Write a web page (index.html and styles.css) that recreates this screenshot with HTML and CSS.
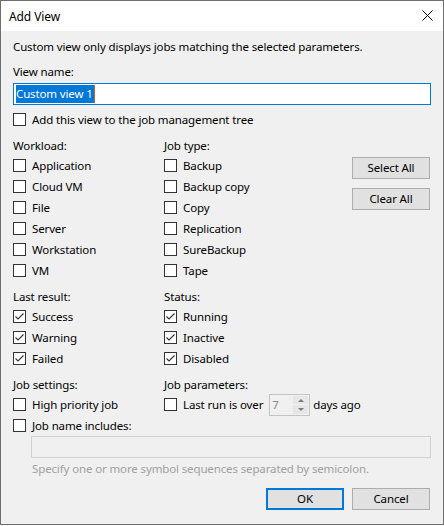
FILE: index.html
```html
<!DOCTYPE html>
<html>
<head>
<meta charset="utf-8">
<link rel="stylesheet" href="styles.css">
</head>
<body>
<div class="window">
  <div class="titlebar">
    <span class="title">Add View</span>
    <svg class="close" width="11" height="11" viewBox="0 0 11 11"><path d="M0.5 0.5 L10.5 10.5 M10.5 0.5 L0.5 10.5" stroke="#000" stroke-width="1" fill="none"/></svg>
  </div>
  <div class="body">
    <p class="desc">Custom view only displays jobs matching the selected parameters.</p>
    <div class="field-label">View name:</div>
    <div class="textbox"><span class="sel">Custom view 1</span><span class="caret"></span></div>
    <div class="check add-row"><span class="box"></span><span>Add this view to the job management tree</span></div>

    <div class="filters">
      <div class="group">
        <div class="group-label">Workload:</div>
        <div class="check"><span class="box"></span><span>Application</span></div>
        <div class="check"><span class="box"></span><span>Cloud VM</span></div>
        <div class="check"><span class="box"></span><span>File</span></div>
        <div class="check"><span class="box"></span><span>Server</span></div>
        <div class="check"><span class="box"></span><span>Workstation</span></div>
        <div class="check"><span class="box"></span><span>VM</span></div>
      </div>
      <div class="group">
        <div class="group-label">Job type:</div>
        <div class="check"><span class="box"></span><span>Backup</span></div>
        <div class="check"><span class="box"></span><span>Backup copy</span></div>
        <div class="check"><span class="box"></span><span>Copy</span></div>
        <div class="check"><span class="box"></span><span>Replication</span></div>
        <div class="check"><span class="box"></span><span>SureBackup</span></div>
        <div class="check"><span class="box"></span><span>Tape</span></div>
      </div>
      <div class="side-buttons">
        <button class="btn">Select All</button>
        <button class="btn">Clear All</button>
      </div>

      <div class="group">
        <div class="group-label">Last result:</div>
        <div class="check"><span class="box checked"><svg width="11" height="11" viewBox="0 0 11 11"><path d="M1.5 5.5 L4 8 L9.5 2.5" stroke="#333" stroke-width="1.1" fill="none"/></svg></span><span>Success</span></div>
        <div class="check"><span class="box checked"><svg width="11" height="11" viewBox="0 0 11 11"><path d="M1.5 5.5 L4 8 L9.5 2.5" stroke="#333" stroke-width="1.1" fill="none"/></svg></span><span>Warning</span></div>
        <div class="check"><span class="box checked"><svg width="11" height="11" viewBox="0 0 11 11"><path d="M1.5 5.5 L4 8 L9.5 2.5" stroke="#333" stroke-width="1.1" fill="none"/></svg></span><span>Failed</span></div>
      </div>
      <div class="group">
        <div class="group-label">Status:</div>
        <div class="check"><span class="box checked"><svg width="11" height="11" viewBox="0 0 11 11"><path d="M1.5 5.5 L4 8 L9.5 2.5" stroke="#333" stroke-width="1.1" fill="none"/></svg></span><span>Running</span></div>
        <div class="check"><span class="box checked"><svg width="11" height="11" viewBox="0 0 11 11"><path d="M1.5 5.5 L4 8 L9.5 2.5" stroke="#333" stroke-width="1.1" fill="none"/></svg></span><span>Inactive</span></div>
        <div class="check"><span class="box checked"><svg width="11" height="11" viewBox="0 0 11 11"><path d="M1.5 5.5 L4 8 L9.5 2.5" stroke="#333" stroke-width="1.1" fill="none"/></svg></span><span>Disabled</span></div>
      </div>
      <div></div>

      <div class="group">
        <div class="group-label">Job settings:</div>
        <div class="check"><span class="box"></span><span>High priority job</span></div>
      </div>
      <div class="group">
        <div class="group-label">Job parameters:</div>
        <div class="check"><span class="box"></span><span>Last run is over</span>
          <span class="spinner"><span class="spin-value">7</span><span class="spin-arrows"><span class="arrow up"></span><span class="arrow down"></span></span></span>
          <span class="after">days ago</span>
        </div>
      </div>
      <div></div>
    </div>

    <div class="check"><span class="box"></span><span>Job name includes:</span></div>
    <div class="textbox disabled"></div>
    <p class="hint">Specify one or more symbol sequences separated by semicolon.</p>
    <div class="actions">
      <button class="btn default">OK</button>
      <button class="btn">Cancel</button>
    </div>
  </div>
</div>
</body>
</html>
```

FILE: styles.css
```css
* { box-sizing: border-box; }
html, body { margin: 0; padding: 0; background: #ffffff; }
body {
  font-family: "Segoe UI", "Noto Sans", sans-serif;
  font-size: 11.5px;
  letter-spacing: -0.13px;
  line-height: 16px;
  color: #000;
}
.window {
  width: 444px;
  height: 525px;
  border: 1px solid #6e6e6e;
  display: flex;
  flex-direction: column;
  background: #f0f0f0;
}
.titlebar {
  height: 30px;
  background: #ffffff;
  display: flex;
  align-items: center;
  justify-content: space-between;
  padding: 0 10px 0 8px;
  flex: none;
}
.title { padding-top: 1px; font-size: 12px; letter-spacing: -0.1px; }
.close { display: block; margin-top: -2px; }
.body {
  flex: 1;
  padding: 8px 12px 0 12px;
  display: flex;
  flex-direction: column;
}
.desc { margin: 0; }
.field-label { margin-top: 9px; }
.textbox {
  margin-top: 3px;
  height: 22px;
  border: 1px solid #0078d7;
  background: #fff;
  padding: 1px 2px;
  display: flex;
  align-items: stretch;
}
.sel {
  background: #0078d7;
  color: #fff;
  line-height: 18px;
  padding-right: 1px;
}
.caret { width: 1px; background: #c8641e; }
.textbox.disabled {
  margin-top: 0;
  margin-left: 18px;
  border-color: #d2d2d2;
  background: #f0f0f0;
}
.check {
  display: flex;
  align-items: center;
  height: 21px;
  white-space: nowrap;
}
.add-row { margin-top: 4px; }
.box {
  width: 13px;
  height: 13px;
  border: 1px solid #333;
  background: #fff;
  flex: none;
  margin-right: 6px;
  display: flex;
}
.box svg { display: block; }
.filters {
  margin-top: 8px;
  display: grid;
  grid-template-columns: 151px minmax(0, 1fr) 78px;
  margin-right: 1px;
  row-gap: 8px;
}
.group { min-width: 0; }
.group-label { margin-bottom: 1px; }
.side-buttons {
  padding-top: 19px;
  display: flex;
  flex-direction: column;
  gap: 9px;
}
.btn {
  font: inherit;
  letter-spacing: inherit;
  color: #000;
  height: 22px;
  width: 78px;
  background: #e1e1e1;
  border: 1px solid #adadad;
  padding: 0;
  margin: 0;
}
.btn.default { border: 2px solid #0078d7; }
.spinner {
  margin-left: 6px;
  width: 41px;
  height: 22px;
  border: 1px solid #c4c4c4;
  display: flex;
  background: #f0f0f0;
  flex: none;
}
.spin-value {
  flex: 1;
  color: #8a8a8a;
  padding-left: 2px;
  line-height: 19px;
}
.spin-arrows {
  width: 16px;
  display: flex;
  flex-direction: column;
  padding: 1px 1px 1px 0;
}
.arrow {
  flex: 1;
  background: #e6e6e6;
  position: relative;
}
.arrow.up { margin-bottom: 1px; }
.arrow::after {
  content: "";
  position: absolute;
  left: 5px;
  width: 0;
  height: 0;
  border-left: 3px solid transparent;
  border-right: 3px solid transparent;
}
.arrow.up::after { top: 3px; border-bottom: 3px solid #7a7a7a; }
.arrow.down::after { top: 3px; border-top: 3px solid #7a7a7a; }
.after { margin-left: 3px; }
.hint {
  margin: 3px 0 0 19px;
  color: #a0a0a0;
}
.actions {
  margin-top: 11px;
  margin-right: 1px;
  display: flex;
  justify-content: flex-end;
  gap: 8px;
}
```
